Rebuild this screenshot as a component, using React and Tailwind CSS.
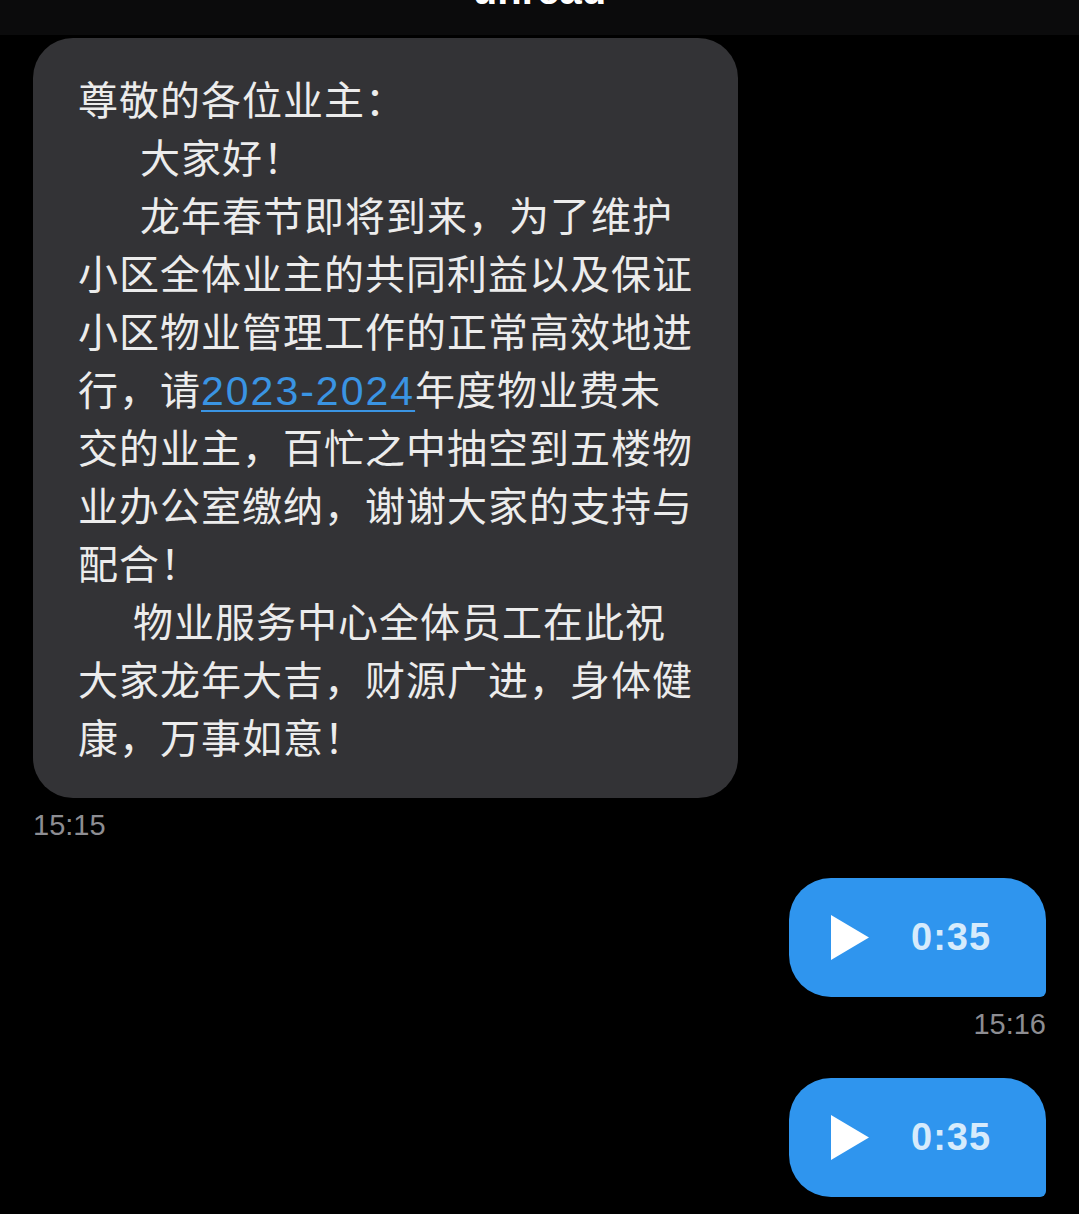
const lines = [
  { text: "尊敬的各位业主：" },
  { text: "大家好！", indent: "pl-[62px]" },
  { text: "龙年春节即将到来，为了维护", indent: "pl-[62px]" },
  { text: "小区全体业主的共同利益以及保证" },
  { text: "小区物业管理工作的正常高效地进" },
  { link: true },
  { text: "交的业主，百忙之中抽空到五楼物" },
  { text: "业办公室缴纳，谢谢大家的支持与" },
  { text: "配合！" },
  { text: "物业服务中心全体员工在此祝", indent: "pl-[55px]" },
  { text: "大家龙年大吉，财源广进，身体健" },
  { text: "康，万事如意！" },
];

function VoiceBubble() {
  return (
    <div className="flex items-center w-[257px] h-[119px] bg-[#2f95ee] rounded-tl-[42px] rounded-tr-[42px] rounded-bl-[42px] rounded-br-[6px] pl-[42px]">
      <svg width="38" height="45" viewBox="0 0 38 45">
        <polygon points="0,0 38,22.5 0,45" fill="#ffffff" />
      </svg>
      <span className="ml-[42px] text-[38px] font-semibold text-[#d6ebfc] font-['Liberation_Sans',sans-serif] tracking-[1px]">
        0:35
      </span>
    </div>
  );
}

export default function App() {
  return (
    <div className="w-[1079px] h-[1214px] overflow-hidden bg-black font-['Noto_Sans_CJK_SC',sans-serif]">
      {/* top bar, title cut off */}
      <div className="h-[35px] bg-[#0b0b0c] overflow-hidden flex justify-center">
        <span className="-mt-[30px] text-[40px] leading-[40px] font-bold text-white font-['Liberation_Sans',sans-serif]">
          unread
        </span>
      </div>

      <div className="mt-[3px] ml-[33px] w-[705px] bg-[#333336] rounded-[40px] pl-[45px] pt-[31px] pb-[33px]">
        {lines.map((l, i) =>
          l.link ? (
            <div key={i} className="h-[58px] leading-[58px] text-[40px] tracking-[1px] text-[#ececec] whitespace-nowrap">
              行，请<span className="text-[#3a94e3] underline underline-offset-[5px] decoration-[2px] font-['Liberation_Sans',sans-serif] text-[41px] tracking-[2px]">2023-2024</span>年度物业费未
            </div>
          ) : (
            <div key={i} className={`h-[58px] leading-[58px] text-[40px] tracking-[1px] text-[#ececec] whitespace-nowrap ${l.indent || ""}`}>
              {l.text}
            </div>
          )
        )}
      </div>
      <div className="ml-[33px] mt-[10px] text-[29px] text-[#8d8d92] font-['Liberation_Sans',sans-serif] leading-[34px]">
        15:15
      </div>

      <div className="flex flex-col items-end pr-[33px] mt-[36px]">
        <VoiceBubble />
        <div className="mt-[10px] text-[29px] text-[#8d8d92] font-['Liberation_Sans',sans-serif] leading-[34px]">
          15:16
        </div>
        <div className="mt-[37px]">
          <VoiceBubble />
        </div>
        <div className="mt-[10px] text-[29px] text-[#8d8d92] font-['Liberation_Sans',sans-serif] leading-[34px]">
          15:16
        </div>
      </div>
    </div>
  );
}
